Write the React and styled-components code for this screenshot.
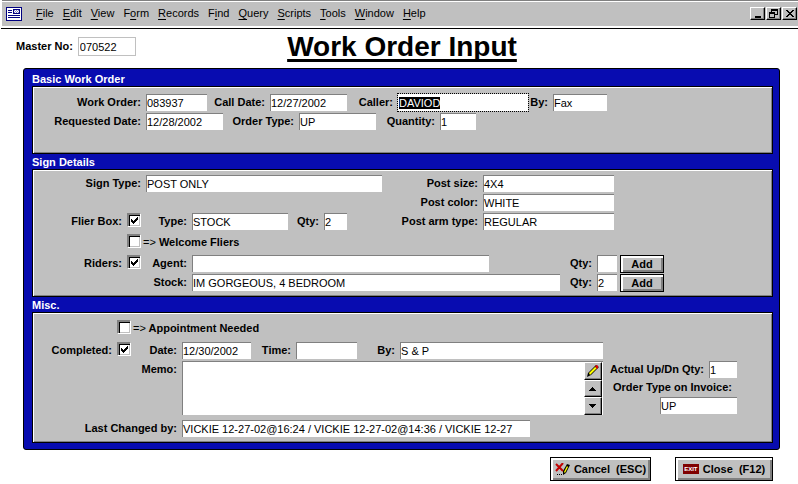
import React, { useEffect, useRef } from 'react';
import styled, { createGlobalStyle, css } from 'styled-components';

const GlobalStyle = createGlobalStyle`
  * {
    box-sizing: border-box;
  }

  body {
    margin: 0;
    background: #fff;
    color: #000;
    font-family: "Liberation Sans", Arial, sans-serif;
    font-size: 11px;
    line-height: 13px;
  }

  input, textarea, button {
    font: inherit;
    color: inherit;
    margin: 0;
  }
`;

const face = '#c0c0c0';
const shade = '#808080';

const MenuBar = styled.header`
  display: flex;
  align-items: center;
  height: 26px;
  margin-left: 2px;
  padding: 0 1px 0 4px;
  background: ${face};
  border-top: 1px solid ${shade};
  box-shadow: inset 0 1px 0 #fff;
`;

const MenuList = styled.nav`
  display: flex;
  flex: 1;
  gap: 9px;
  margin-left: 14px;

  a {
    color: #000;
    text-decoration: none;
  }

  u {
    text-underline-offset: 2px;
  }
`;

const WindowButtons = styled.div`
  display: flex;
  gap: 1px;
`;

const WindowButton = styled.button`
  display: grid;
  place-items: center;
  width: 15px;
  height: 13px;
  padding: 0;
  background: ${face};
  border: 1px solid;
  border-color: #fff #000 #000 #fff;
  box-shadow: inset -1px -1px 0 ${shade};
`;

const Rule = styled.hr`
  height: 1px;
  margin: 2px 0 0 1px;
  border: 0;
  background: #000;
`;

const TitleRow = styled.div`
  display: grid;
  grid-template-columns: 1fr auto 1fr;
  align-items: center;
  height: 39px;
  padding: 0 0 4px 6px;
`;

const Title = styled.h1`
  margin: 0;
  font-size: 28px;
  line-height: 32px;
  text-decoration: underline;
  text-decoration-skip-ink: none;
  text-decoration-thickness: 3px;
  text-underline-offset: 3px;
`;

const Master = styled.div`
  display: flex;
  align-items: center;
  gap: 5px;
  padding-left: 10px;
  font-weight: bold;
`;

const MasterInput = styled.input`
  width: 58px;
  height: 19px;
  padding: 0 1px;
  border: 1px solid ${face};
  font-weight: normal;
  outline: 0;
`;

const Card = styled.main`
  margin: 0 18px 0 23px;
  padding: 2px 6px 6px 8px;
  background: #080cb0;
  border: 1px solid #000;
  border-radius: 3px;
`;

const SectionTitle = styled.h2`
  height: 15px;
  margin: 0;
  color: #fff;
  font-size: 11px;
  line-height: 17px;
`;

const Panel = styled.section`
  display: flex;
  flex-direction: column;
  gap: 2px;
  min-height: ${(p) => p.$height}px;
  padding-top: ${(p) => p.$top}px;
  padding-left: 1px;
  background: ${face};
  border: 1px solid #000;
  box-shadow: inset 1px 1px 0 #fff, inset -1px -1px 0 ${shade};
`;

const Row = styled.div`
  display: flex;
  align-items: center;
  height: ${(p) => p.$height || 17}px;
`;

const Label = styled.label`
  flex: none;
  width: ${(p) => p.$width}px;
  padding-right: 5px;
  font-weight: bold;
  line-height: 17px;
  text-align: right;
  white-space: nowrap;
`;

const TextInput = styled.input`
  flex: none;
  width: ${(p) => p.$width}px;
  height: 17px;
  padding: 0;
  background: #fff;
  border: 0 solid ${shade};
  border-width: 1px 0 0 1px;
  border-radius: 0;
  outline: 0;

  &::selection {
    background: #000;
    color: #fff;
  }

  ${(p) =>
    p.$active &&
    css`
      border-color: #fff;
      outline: 1px dotted #000;
    `}
`;

const CheckFrame = styled.span`
  display: grid;
  flex: none;
  place-items: center;
  width: 14px;
  height: 14px;
  margin-bottom: 3px;

  > * {
    grid-area: 1 / 1;
  }

  svg {
    pointer-events: none;
    visibility: hidden;
  }

  input:checked + svg {
    visibility: visible;
  }
`;

const CheckInput = styled.input`
  appearance: none;
  width: 14px;
  height: 14px;
  background: #fff;
  border: 1px solid;
  border-color: ${shade} #fff #fff ${shade};
  box-shadow: inset 1px 1px 0 ${shade}, inset 2px 2px 0 #000, inset -1px -1px 0 ${face};
`;

const CheckLabel = styled.label`
  padding-left: 2px;
  font-weight: bold;
  white-space: pre;

  span {
    font-weight: normal;
  }
`;

const Button = styled.button`
  display: flex;
  flex: none;
  align-items: center;
  justify-content: center;
  gap: 4px;
  width: ${(p) => p.$width}px;
  height: ${(p) => p.$height}px;
  padding: 0;
  background: ${face};
  border: 1px solid #000;
  box-shadow: inset 2px 2px 0 #fff, inset -2px -2px 0 ${shade};
  font-weight: bold;
  white-space: pre;
`;

const AddButton = styled(Button)`
  align-self: flex-start;
  margin-left: 3px;
`;

const MemoArea = styled.div`
  display: flex;
  align-items: flex-start;
`;

const MemoBox = styled.div`
  display: flex;
  width: 421px;
  height: 54px;
  padding-right: 1px;
  background: #fff;
  border: 0 solid ${shade};
  border-width: 1px 0 0 1px;
`;

const MemoText = styled.textarea`
  flex: 1;
  padding: 0;
  border: 0;
  outline: 0;
  resize: none;
`;

const MemoTools = styled.div`
  display: flex;
  flex-direction: column;
  width: 18px;
  height: 53px;
  background: ${face};
`;

const MemoButton = styled(WindowButton)`
  flex: 1;
  width: 18px;
  height: auto;
`;

const InvoiceInfo = styled.div`
  display: flex;
  flex-direction: column;
  align-items: flex-end;
  gap: 1px;
  width: 134px;
`;

const Footer = styled.footer`
  display: flex;
  justify-content: flex-end;
  gap: 24px;
  padding: 7px 25px 3px 0;
`;

const ExitBadge = styled.span`
  width: 16px;
  height: 10px;
  background: #800000;
  color: #fff;
  font-size: 6px;
  line-height: 10px;
  text-align: center;
`;

const menus = ['File', 'Edit', 'View', 'Form', 'Records', 'Find', 'Query', 'Scripts', 'Tools', 'Window', 'Help'];
// position of the shortcut letter, where it is not the first
const shortcuts = { Form: 1, Find: 1 };

function Field({ id, label, labelWidth, width, value = '', ...rest }) {
  return (
    <>
      <Label htmlFor={id} $width={labelWidth}>{label}</Label>
      <TextInput id={id} type="text" $width={width} defaultValue={value} {...rest} />
    </>
  );
}

function Checkbox({ id, checked }) {
  return (
    <CheckFrame>
      <CheckInput id={id} type="checkbox" defaultChecked={checked} />
      <svg width="14" height="14" shapeRendering="crispEdges">
        <path d="M4 6h1v3h-1zM5 7h1v3h-1zM6 8h1v3h-1zM7 7h1v3h-1zM8 6h1v3h-1zM9 5h1v3h-1zM10 4h1v3h-1z" />
      </svg>
    </CheckFrame>
  );
}

function FormIcon() {
  return (
    <svg width="16" height="14" shapeRendering="crispEdges">
      <path fill="#000080" d="M0 0h16v14H0z" />
      <path fill="#fff" d="M1 1h14v12H1z" />
      <path fill="#000080" d="M2 3h4v1H2zM2 5h4v1H2zM7 2h7v5H7zM2 8h12v1H2zM2 10h12v1H2z" />
      <path fill="#fff" d="M8 3h5v3H8z" />
      <path fill="#8080c0" d="M8 3h1v1H8zM10 3h1v1h-1zM12 3h1v1h-1zM9 4h1v1H9zM11 4h1v1h-1zM8 5h1v1H8zM10 5h1v1h-1zM12 5h1v1h-1z" />
    </svg>
  );
}

function PencilIcon() {
  return (
    <svg width="14" height="14">
      <path d="M1 13l1-4 8-8 3 2-8 8z" fill="#000" />
      <path d="M3 9l6-6 2 1-7 7z" fill="#ff0" />
      <path d="M9 2l2-1 1 1v2l-1 1z" fill="#e00000" />
    </svg>
  );
}

function CancelIcon() {
  return (
    <svg width="15" height="13">
      <path d="M1 1l7 7M8 0L1 8" fill="none" stroke="#c00000" strokeWidth="2" />
      <path d="M8 12V8l4-7 3 1-4 8z" fill="#000" />
      <path d="M9 9l3-6 1 1-3 6z" fill="#ff0" />
      <path d="M2 11h1v1H2zM4 11h1v1H4zM6 11h1v1H6z" />
    </svg>
  );
}

function App() {
  const caller = useRef(null);

  useEffect(() => {
    caller.current.focus();
    caller.current.select();
  }, []);

  return (
    <>
      <GlobalStyle />
      <MenuBar>
        <FormIcon />
        <MenuList>
          {menus.map((name) => {
            const at = shortcuts[name] || 0;
            return (
              <a href="#" key={name}>
                {name.slice(0, at)}<u>{name[at]}</u>{name.slice(at + 1)}
              </a>
            );
          })}
        </MenuList>
        <WindowButtons>
          <WindowButton aria-label="Minimize">
            <svg width="11" height="9" shapeRendering="crispEdges"><path d="M3 7h6v2H3z" /></svg>
          </WindowButton>
          <WindowButton aria-label="Restore">
            <svg width="11" height="9" shapeRendering="crispEdges">
              <path d="M3 0h7v6H7V5h2V2H4v1H3zM1 3h6v6H1zM2 5v3h4V5z" fillRule="evenodd" />
            </svg>
          </WindowButton>
          <WindowButton aria-label="Close">
            <svg width="11" height="9" shapeRendering="crispEdges">
              <path d="M2 1h2v1h1v1h2V2h1V1h2v1H9v1H8v1H7v1h1v1h1v1h1v1H8V7H7V6H5v1H4v1H2V7h1V6h1V5h1V4H4V3H3V2H2z" />
            </svg>
          </WindowButton>
        </WindowButtons>
      </MenuBar>
      <Rule />

      <TitleRow>
        <Master>
          <label htmlFor="master">Master No:</label>
          <MasterInput id="master" defaultValue="070522" />
        </Master>
        <Title>Work Order Input</Title>
      </TitleRow>

      <Card>
        <SectionTitle>Basic Work Order</SectionTitle>
        <Panel $height={68} $top={7}>
          <Row>
            <Field id="order" label="Work Order:" labelWidth={112} width={61} value="083937" />
            <Field id="call" label="Call Date:" labelWidth={63} width={77} value="12/27/2002" />
            <Field id="caller" label="Caller:" labelWidth={51} width={130} value="DAVIOD" ref={caller} $active />
            <Field id="by" label="By:" labelWidth={25} width={54} value="Fax" />
          </Row>
          <Row>
            <Field id="requested" label="Requested Date:" labelWidth={112} width={77} value="12/28/2002" />
            <Field id="otype" label="Order Type:" labelWidth={76} width={77} value="UP" />
            <Field id="quantity" label="Quantity:" labelWidth={64} width={36} value="1" />
          </Row>
        </Panel>

        <SectionTitle>Sign Details</SectionTitle>
        <Panel $height={128} $top={5}>
          <Row>
            <Field id="sign" label="Sign Type:" labelWidth={112} width={236} value="POST ONLY" />
            <Field id="psize" label="Post size:" labelWidth={101} width={131} value="4X4" />
          </Row>
          <Row>
            <Field id="pcolor" label="Post color:" labelWidth={449} width={131} value="WHITE" />
          </Row>
          <Row>
            <Label htmlFor="flier" $width={93}>Flier Box:</Label>
            <Checkbox id="flier" checked />
            <Field id="ftype" label="Type:" labelWidth={51} width={96} value="STOCK" />
            <Field id="fqty" label="Qty:" labelWidth={36} width={23} value="2" />
            <Field id="parm" label="Post arm type:" labelWidth={136} width={131} value="REGULAR" />
          </Row>
          <Row $height={21}>
            <Label as="span" $width={93} />
            <Checkbox id="welcome" />
            <CheckLabel htmlFor="welcome"><span>=&gt;</span> Welcome Fliers</CheckLabel>
          </Row>
          <Row>
            <Label htmlFor="riders" $width={93}>Riders:</Label>
            <Checkbox id="riders" checked />
            <Field id="agent" label="Agent:" labelWidth={51} width={297} />
            <Field id="aqty" label="Qty:" labelWidth={108} width={20} />
            <AddButton $width={44} $height={18}>Add</AddButton>
          </Row>
          <Row>
            <Field id="stock" label="Stock:" labelWidth={158} width={368} value="IM GORGEOUS, 4 BEDROOM" />
            <Field id="sqty" label="Qty:" labelWidth={37} width={20} value="2" />
            <AddButton $width={44} $height={18}>Add</AddButton>
          </Row>
        </Panel>

        <SectionTitle>Misc.</SectionTitle>
        <Panel $height={131} $top={4}>
          <Row $height={23}>
            <Label as="span" $width={83} />
            <Checkbox id="appointment" />
            <CheckLabel htmlFor="appointment"><span>=&gt;</span> Appointment Needed</CheckLabel>
          </Row>
          <Row>
            <Label htmlFor="completed" $width={83}>Completed:</Label>
            <Checkbox id="completed" checked />
            <Field id="date" label="Date:" labelWidth={51} width={69} value="12/30/2002" />
            <Field id="time" label="Time:" labelWidth={45} width={61} />
            <Field id="cby" label="By:" labelWidth={43} width={203} value="S & P" />
          </Row>
          <MemoArea>
            <Label htmlFor="memo" $width={148}>Memo:</Label>
            <MemoBox>
              <MemoText id="memo" />
              <MemoTools>
                <MemoButton aria-label="Edit memo"><PencilIcon /></MemoButton>
                <MemoButton aria-label="Scroll up">
                  <svg width="8" height="4" shapeRendering="crispEdges"><path d="M3 0h1v1h1v1h1v1h1v1H0V3h1V2h1V1h1z" /></svg>
                </MemoButton>
                <MemoButton aria-label="Scroll down">
                  <svg width="8" height="4" shapeRendering="crispEdges"><path d="M0 0h7v1H6v1H5v1H4v1H3V3H2V2H1V1H0z" /></svg>
                </MemoButton>
              </MemoTools>
            </MemoBox>
            <InvoiceInfo>
              <Row>
                <Field id="actual" label="Actual Up/Dn Qty:" labelWidth={106} width={28} value="1" />
              </Row>
              <Label htmlFor="invoice" $width={134}>Order Type on Invoice:</Label>
              <TextInput id="invoice" $width={77} defaultValue="UP" />
            </InvoiceInfo>
          </MemoArea>
          <Row $height={23}>
            <Field id="changed" label="Last Changed by:" labelWidth={148} width={348} value="VICKIE 12-27-02@16:24 / VICKIE 12-27-02@14:36 / VICKIE 12-27" />
          </Row>
        </Panel>
      </Card>

      <Footer>
        <Button $width={101} $height={24}><CancelIcon />{'Cancel  (ESC)'}</Button>
        <Button $width={98} $height={24}><ExitBadge>EXIT</ExitBadge>{'Close  (F12)'}</Button>
      </Footer>
    </>
  );
}

export default App;
